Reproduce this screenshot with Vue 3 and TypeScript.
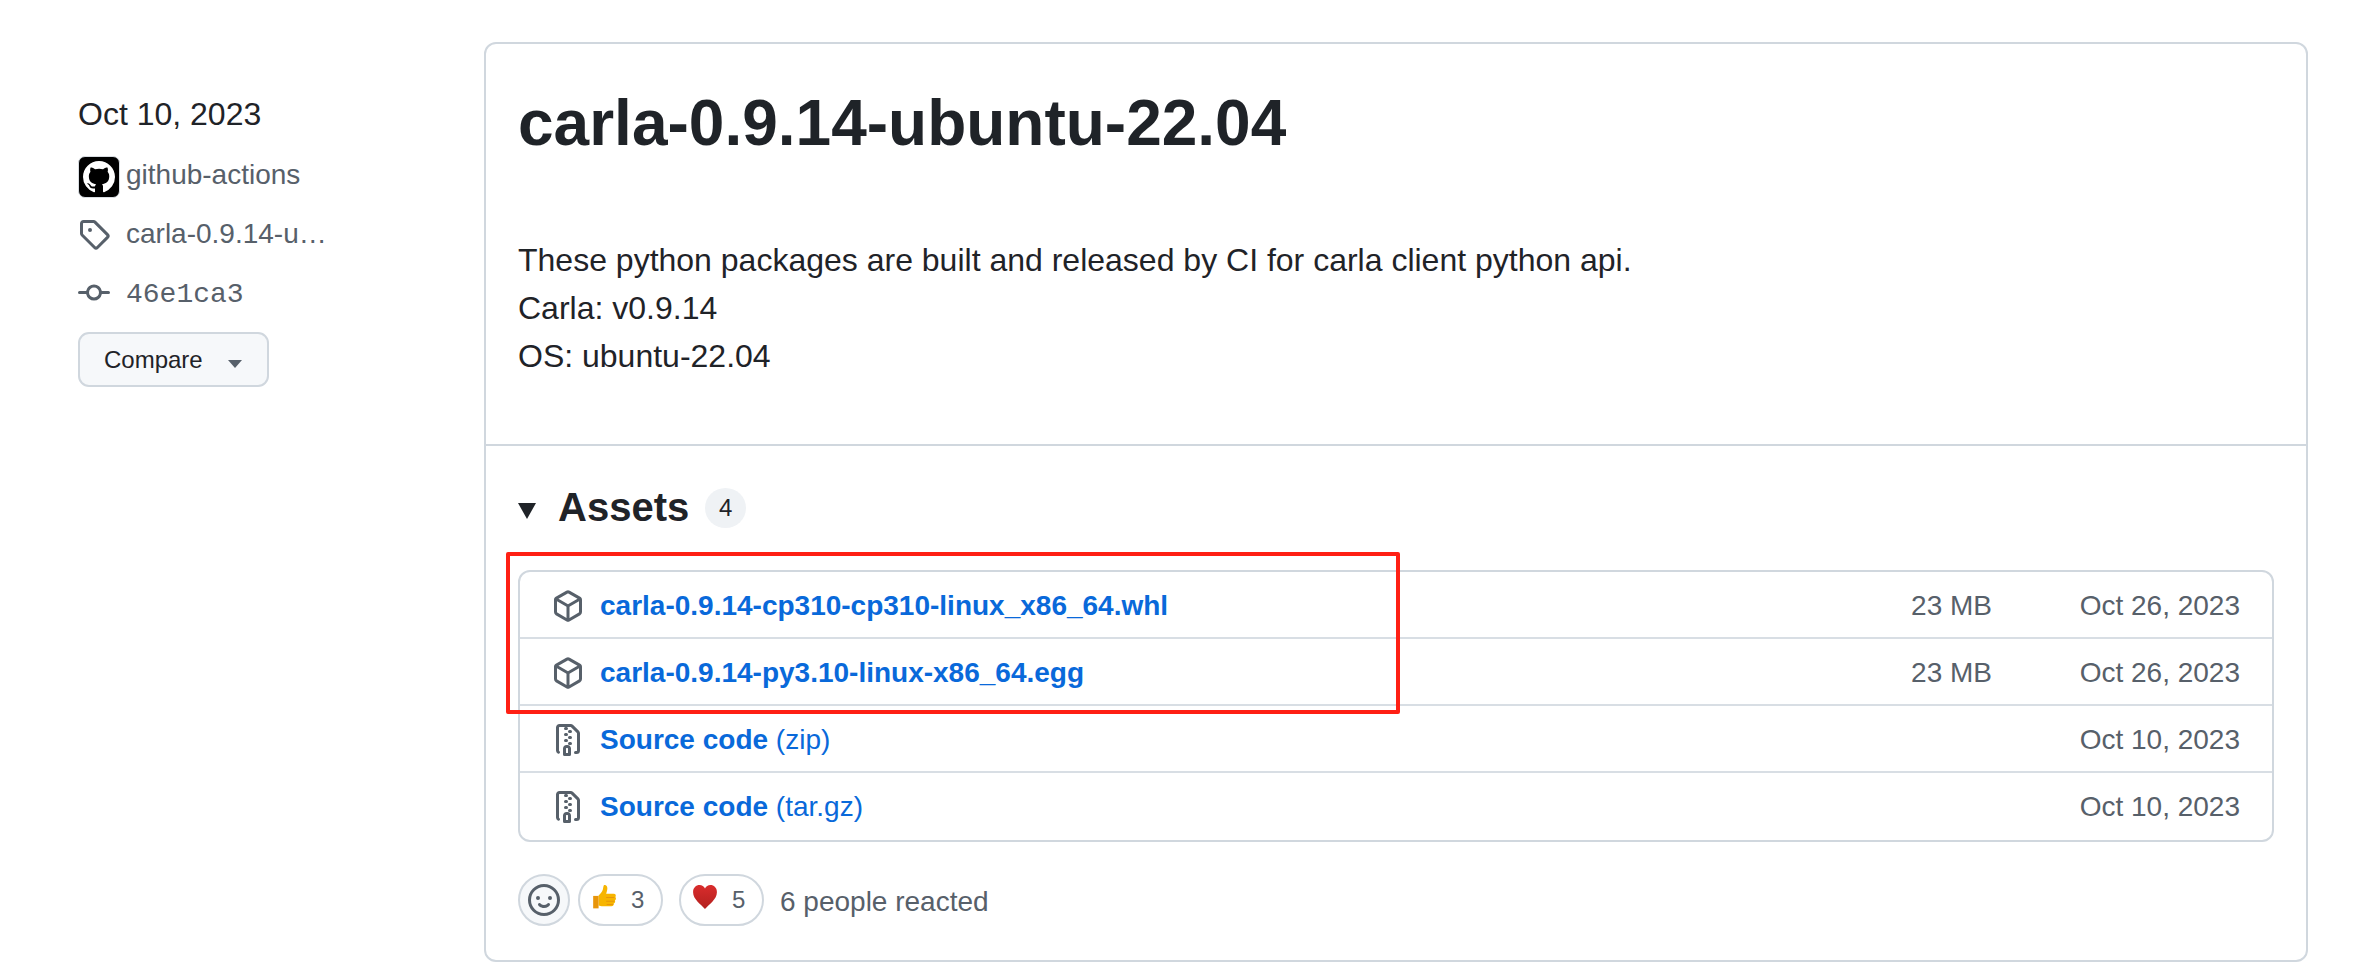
<script setup lang="ts">
type Asset = {
  name: string
  suffix?: string
  size?: string
  date: string
  zip: boolean
}

const assets: Asset[] = [
  { name: 'carla-0.9.14-cp310-cp310-linux_x86_64.whl', size: '23 MB', date: 'Oct 26, 2023', zip: false },
  { name: 'carla-0.9.14-py3.10-linux-x86_64.egg', size: '23 MB', date: 'Oct 26, 2023', zip: false },
  { name: 'Source code', suffix: '(zip)', date: 'Oct 10, 2023', zip: true },
  { name: 'Source code', suffix: '(tar.gz)', date: 'Oct 10, 2023', zip: true },
]

const packagePath =
  'm8.878.392 5.25 3.045c.54.314.872.89.872 1.514v6.098a1.75 1.75 0 0 1-.872 1.514l-5.25 3.045a1.75 1.75 0 0 1-1.756 0l-5.25-3.045A1.75 1.75 0 0 1 1 11.049V4.951c0-.624.332-1.201.872-1.514L7.122.392a1.75 1.75 0 0 1 1.756 0ZM7.875 1.69l-4.63 2.685L8 7.133l4.755-2.758-4.63-2.685a.248.248 0 0 0-.25 0ZM2.5 5.677v5.372c0 .09.047.171.125.216l4.625 2.683V8.432Zm6.25 8.271 4.625-2.683a.25.25 0 0 0 .125-.216V5.677L8.75 8.432Z'
const zipPath =
  'M3.5 1.75v11.5c0 .09.048.173.126.217a.75.75 0 0 1-.752 1.298A1.748 1.748 0 0 1 2 13.25V1.75C2 .784 2.784 0 3.75 0h5.586c.464 0 .909.185 1.237.513l2.914 2.914c.329.328.513.773.513 1.237v8.586A1.75 1.75 0 0 1 12.25 15h-.5a.75.75 0 0 1 0-1.5h.5a.25.25 0 0 0 .25-.25V4.664a.25.25 0 0 0-.073-.177L9.513 1.573a.25.25 0 0 0-.177-.073H7.25a.75.75 0 0 1 0 1.5h-.5a.75.75 0 0 1 0-1.5h-3a.25.25 0 0 0-.25.25Zm3.75 8.75h.5c.966 0 1.75.784 1.75 1.75v3a.75.75 0 0 1-.75.75h-2.5a.75.75 0 0 1-.75-.75v-3c0-.966.784-1.75 1.75-1.75ZM6 5.25a.75.75 0 0 1 .75-.75h.5a.75.75 0 0 1 0 1.5h-.5A.75.75 0 0 1 6 5.25Zm.75 2.25h.5a.75.75 0 0 1 0 1.5h-.5a.75.75 0 0 1 0-1.5ZM8 6.75A.75.75 0 0 1 8.75 6h.5a.75.75 0 0 1 0 1.5h-.5A.75.75 0 0 1 8 6.75ZM8.75 3h.5a.75.75 0 0 1 0 1.5h-.5a.75.75 0 0 1 0-1.5ZM8 9.75A.75.75 0 0 1 8.75 9h.5a.75.75 0 0 1 0 1.5h-.5A.75.75 0 0 1 8 9.75Zm-1 2.5v2.25h1v-2.25a.25.25 0 0 0-.25-.25h-.5a.25.25 0 0 0-.25.25Z'
</script>

<template>
  <div class="page">
    <aside class="side">
      <div class="release-date">Oct 10, 2023</div>
      <div class="side-row author">
        <span class="avatar">
          <svg viewBox="0 0 16 16" width="32" height="32">
            <path fill="#fff" d="M8 0c4.42 0 8 3.58 8 8a8.013 8.013 0 0 1-5.45 7.59c-.4.08-.55-.17-.55-.38 0-.27.01-1.13.01-2.2 0-.75-.25-1.23-.54-1.48 1.78-.2 3.65-.88 3.65-3.95 0-.88-.31-1.59-.82-2.15.08-.2.36-1.02-.08-2.12 0 0-.67-.22-2.2.82-.64-.18-1.32-.27-2-.27-.68 0-1.36.09-2 .27-1.53-1.03-2.2-.82-2.2-.82-.44 1.1-.16 1.92-.08 2.12-.51.56-.82 1.28-.82 2.15 0 3.06 1.86 3.75 3.64 3.95-.23.2-.44.55-.51 1.07-.46.21-1.61.55-2.33-.66-.15-.24-.6-.83-1.23-.82-.67.01-.27.38.01.53.34.19.73.9.82 1.13.16.45.68 1.31 2.69.94 0 .67.01 1.3.01 1.49 0 .21-.15.45-.55.38A7.995 7.995 0 0 1 0 8c0-4.42 3.58-8 8-8Z" />
          </svg>
        </span>
        <span class="author-name">github-actions</span>
      </div>
      <div class="side-row tag">
        <svg class="side-icon" viewBox="0 0 16 16">
          <path d="M1 7.775V2.75C1 1.784 1.784 1 2.75 1h5.025c.464 0 .91.184 1.238.513l6.25 6.25a1.75 1.75 0 0 1 0 2.474l-5.026 5.026a1.75 1.75 0 0 1-2.474 0l-6.25-6.25A1.752 1.752 0 0 1 1 7.775Zm1.5 0c0 .066.026.13.073.177l6.25 6.25a.25.25 0 0 0 .354 0l5.025-5.025a.25.25 0 0 0 0-.354l-6.25-6.25a.25.25 0 0 0-.177-.073H2.75a.25.25 0 0 0-.25.25ZM6 5a1 1 0 1 1 0 2 1 1 0 0 1 0-2Z" />
        </svg>
        <span class="truncate">carla-0.9.14-ubuntu-22.04</span>
      </div>
      <div class="side-row commit">
        <svg class="side-icon" viewBox="0 0 16 16">
          <path d="M11.93 8.5a4.002 4.002 0 0 1-7.86 0H.75a.75.75 0 0 1 0-1.5h3.32a4.002 4.002 0 0 1 7.86 0h3.32a.75.75 0 0 1 0 1.5Zm-1.43-.75a2.5 2.5 0 1 0-5 0 2.5 2.5 0 0 0 5 0Z" />
        </svg>
        <span class="mono">46e1ca3</span>
      </div>
      <button class="compare" type="button">
        Compare
        <span class="caret"></span>
      </button>
    </aside>

    <main class="card">
      <section class="body">
        <h1>carla-0.9.14-ubuntu-22.04</h1>
        <p>
          These python packages are built and released by CI for carla client python api.<br />
          Carla: v0.9.14<br />
          OS: ubuntu-22.04
        </p>
      </section>

      <section class="footer">
        <div class="assets-head">
          <span class="marker"></span>
          <h2>Assets</h2>
          <span class="counter">4</span>
        </div>

        <div class="assets">
          <div v-for="asset in assets" :key="asset.name + asset.suffix" class="asset">
            <svg class="asset-icon" viewBox="0 0 16 16">
              <path :d="asset.zip ? zipPath : packagePath" />
            </svg>
            <span class="asset-name">
              <b>{{ asset.name }}</b>{{ asset.suffix ? ' ' + asset.suffix : '' }}
            </span>
            <span class="asset-size">{{ asset.size }}</span>
            <span class="asset-date">{{ asset.date }}</span>
          </div>
          <div class="highlight"></div>
        </div>

        <div class="reactions">
          <span class="add-reaction">
            <svg viewBox="0 0 16 16" width="32" height="32">
              <path d="M8 0a8 8 0 1 1 0 16A8 8 0 0 1 8 0ZM1.5 8a6.5 6.5 0 1 0 13 0 6.5 6.5 0 0 0-13 0Zm3.82 1.636a.75.75 0 0 1 1.038.175l.007.009c.103.118.22.222.35.31.264.178.683.37 1.285.37.602 0 1.02-.192 1.285-.371.13-.088.247-.192.35-.31l.007-.008a.75.75 0 0 1 1.222.87l-.022-.015c.02.013.021.015.021.015v.001l-.001.002-.002.003-.005.007-.014.019a2.066 2.066 0 0 1-.184.213c-.16.166-.338.316-.53.445-.63.418-1.37.638-2.127.629-.946 0-1.652-.308-2.126-.63a3.331 3.331 0 0 1-.715-.657l-.014-.02-.005-.006-.002-.003v-.002h-.001l.613-.432-.614.43a.75.75 0 0 1 .183-1.044ZM12 7a1 1 0 1 1-2 0 1 1 0 0 1 2 0ZM5 8a1 1 0 1 1 0-2 1 1 0 0 1 0 2Z" />
            </svg>
          </span>
          <span class="pill">
            <svg class="emoji" viewBox="0 0 24 24">
              <path fill="#f7b500" d="M7 10.500c2-1.500 3.400-3.500 4-5.600.4-1.400.3-2.900 1-3.900 1.900-.5 3.100 1 3.100 3 0 1.900-.6 3.500-1.100 5H21c1.800 0 2.400 1.700 1.500 3 .9 1 .7 2.500-.4 3.200.5 1.200 0 2.400-1.100 2.900.2 1.500-.7 2.400-2.100 2.400H11c-1.700 0-2.800-.5-4-.7Z" />
              <path fill="#e8950a" d="M2 11h5v11.500H2Z" />
              <path fill="#e8950a" d="M14 12h7.500v1H14Zm0 3.400h7.500v1H14Zm.5 3h6v1h-6Z" />
            </svg>
            <span>3</span>
          </span>
          <span class="pill heart-pill">
            <svg class="emoji" viewBox="0 0 24 24">
              <defs>
                <linearGradient id="heart-fill" x1="0" y1="0" x2="0" y2="1">
                  <stop offset="0" stop-color="#d92c2c" />
                  <stop offset="1" stop-color="#b3211f" />
                </linearGradient>
              </defs>
              <path fill="url(#heart-fill)" d="M12 23C8 18.500 1 14 1 7.500 1 3.500 3.800 1 7 1c2.300 0 4 1.200 5 3.200C13 2.200 14.700 1 17 1c3.200 0 6 2.500 6 6.500C23 14 16 18.500 12 23Z" />
            </svg>
            <span>5</span>
          </span>
          <span class="reacted">6 people reacted</span>
        </div>
      </section>
    </main>
  </div>
</template>

<style scoped>
.page {
  display: flex;
  box-sizing: border-box;
  width: 2366px;
  height: 978px;
  padding: 42px 0 0 78px;
  font-family: "Liberation Sans", Arial, sans-serif;
  color: #1f2328;
  background: #fff;
}

.side {
  width: 406px;
  flex: none;
  font-size: 28px;
  color: #57606a;
}

.release-date {
  margin-top: 49px;
  height: 46px;
  line-height: 46px;
  font-size: 32px;
  color: #1f2328;
}

.side-row {
  display: flex;
  align-items: center;
  height: 58px;
}

.author {
  margin-top: 19px;
  height: 42px;
  gap: 6px;
}

.author-name {
  margin-top: -4px;
}

.avatar {
  box-sizing: border-box;
  display: flex;
  align-items: center;
  justify-content: center;
  width: 42px;
  height: 42px;
  border: 1px solid #d8dde2;
  border-radius: 7px;
  background: #000;
}

.tag {
  margin-top: 7px;
  gap: 16px;
}

.commit {
  margin-top: 1px;
  gap: 16px;
}

.side-icon {
  width: 32px;
  height: 32px;
  flex: none;
  fill: #57606a;
}

.truncate {
  width: 206px;
  overflow: hidden;
  white-space: nowrap;
  text-overflow: ellipsis;
}

.mono {
  margin-top: 2px;
  font-family: "Liberation Mono", monospace;
  font-size: 28px;
}

.compare {
  display: flex;
  align-items: center;
  box-sizing: border-box;
  width: 191px;
  height: 55px;
  margin-top: 10px;
  padding: 0 0 0 24px;
  border: 2px solid #d0d7de;
  border-radius: 11px;
  background: #f6f8fa;
  font: 24px "Liberation Sans", Arial, sans-serif;
  color: #1f2328;
}

.caret {
  width: 0;
  height: 0;
  margin: 8px 0 0 25px;
  border-style: solid;
  border-width: 8px 7.5px 0;
  border-color: #57606a transparent transparent;
}

.card {
  box-sizing: border-box;
  width: 1824px;
  height: 920px;
  border: 2px solid #d0d7de;
  border-radius: 12px;
}

.body {
  box-sizing: border-box;
  height: 402px;
  padding: 39px 32px 0;
  border-bottom: 2px solid #d0d7de;
}

h1 {
  margin: 0;
  height: 80px;
  line-height: 80px;
  font-size: 64px;
  font-weight: 700;
  color: #1f2328;
}

p {
  margin: 73px 0 0;
  font-size: 32px;
  line-height: 48px;
  color: #1f2328;
}

.footer {
  padding: 0 32px;
}

.assets-head {
  display: flex;
  align-items: center;
  height: 124px;
}

.marker {
  width: 0;
  height: 0;
  margin: 6px 22px 0 0;
  border-style: solid;
  border-width: 16px 9px 0;
  border-color: #1f2328 transparent transparent;
}

h2 {
  margin: -2px 0 0;
  font-size: 40px;
  font-weight: 700;
  color: #1f2328;
}

.counter {
  display: flex;
  align-items: center;
  justify-content: center;
  width: 41px;
  height: 40px;
  margin-left: 16px;
  border-radius: 50%;
  background: #eff2f5;
  font-size: 24px;
}

.assets {
  position: relative;
  box-sizing: border-box;
  height: 272px;
  border: 2px solid #d0d7de;
  border-radius: 12px;
}

.asset {
  display: flex;
  align-items: center;
  box-sizing: border-box;
  height: 67px;
  padding: 2px 32px 0;
  border-top: 2px solid #d8dee4;
  font-size: 28px;
}

.asset:first-child {
  border-top: 0;
  height: 65px;
}

.asset-icon {
  width: 32px;
  height: 32px;
  flex: none;
  margin-right: 16px;
  fill: #57606a;
}

.asset-name {
  flex: 1;
  color: #0969da;
}

.asset-size {
  width: 130px;
  text-align: right;
  color: #57606a;
}

.asset-date {
  width: 248px;
  text-align: right;
  color: #57606a;
}

.highlight {
  position: absolute;
  left: -14px;
  top: -20px;
  width: 894px;
  height: 162px;
  box-sizing: border-box;
  border: 4px solid #ff2014;
  border-radius: 2px;
}

.reactions {
  display: flex;
  align-items: center;
  margin-top: 32px;
  height: 52px;
  font-size: 24px;
  color: #57606a;
}

.add-reaction {
  display: flex;
  align-items: center;
  justify-content: center;
  box-sizing: border-box;
  width: 52px;
  height: 52px;
  border: 2px solid #d0d7de;
  border-radius: 50%;
  background: #f6f8fa;
}

.add-reaction svg {
  fill: #57606a;
}

.pill {
  display: flex;
  align-items: center;
  box-sizing: border-box;
  width: 85px;
  height: 52px;
  margin-left: 8px;
  padding-left: 11px;
  border: 2px solid #d0d7de;
  border-radius: 26px;
  gap: 14px;
}

.heart-pill {
  margin-left: 16px;
}

.emoji {
  width: 26px;
  height: 26px;
  margin-top: -6px;
}

.reacted {
  margin: 4px 0 0 16px;
  font-size: 28px;
}
</style>

<style>
html,
body {
  margin: 0;
  background: #fff;
}
</style>
